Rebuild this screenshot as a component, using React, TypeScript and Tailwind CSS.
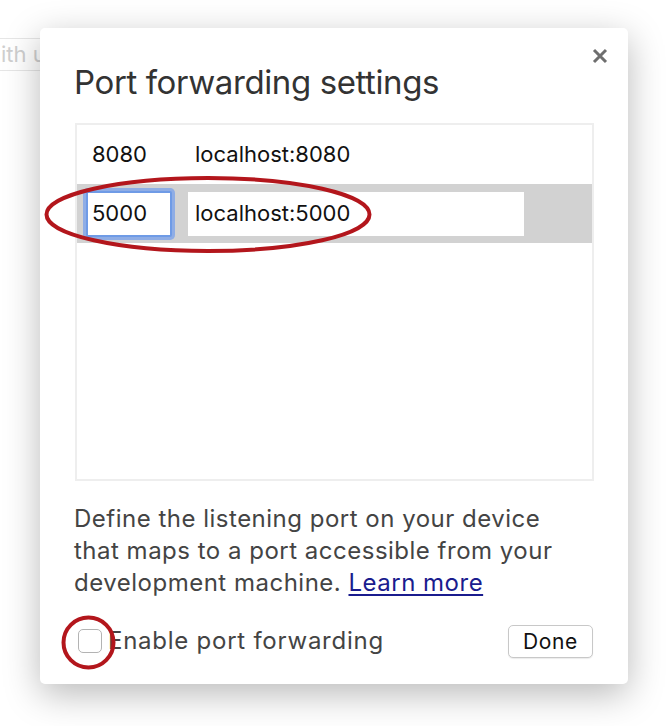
import React from 'react'

const font = { fontFamily: 'Inter, "Noto Sans", sans-serif' }

function CloseIcon() {
  return (
    <svg width="16" height="16" viewBox="0 0 16 16" className="text-[#6e6e6e]">
      <path d="M2 2 L14 14 M14 2 L2 14" stroke="currentColor" strokeWidth="3" strokeLinecap="butt" />
    </svg>
  )
}

export default function App() {
  return (
    <div className="relative w-[668px] h-[726px] bg-white overflow-hidden" style={font}>
      {/* page behind the dialog */}
      <div className="pt-[38px]">
        <div className="w-[120px] h-[33px] border border-[#e6e6e6] flex items-center text-[22px] text-[#cfcfcf] -ml-[14px]">
          <span className="pl-[14px]">ith u</span>
        </div>
      </div>

      {/* dialog */}
      <div className="absolute left-[40px] top-[28px] w-[588px] h-[656px] bg-white rounded-[5px] shadow-[0_10px_36px_rgba(0,0,0,0.28)] flex flex-col px-[34px]">
        <button className="absolute top-[20px] right-[20px] w-[16px] h-[16px] flex items-center justify-center">
          <CloseIcon />
        </button>

        <h1 className="mt-[34px] text-[33px] leading-[40px] text-[#333] font-normal tracking-[-0.4px]">Port forwarding settings</h1>

        <div className="mt-[21px] ml-[1px] h-[358px] border-2 border-[#eeeeee] flex flex-col">
          <div className="h-[59px] flex items-center text-[22px] text-[#111]">
            <span className="pl-[15px] w-[118px]">8080</span>
            <span>localhost:8080</span>
          </div>
          <div className="h-[59px] bg-[#d2d2d2] flex items-center text-[22px] text-[#111]">
            <div className="ml-[9px] w-[86px] h-[46px] bg-white border-2 border-[#6f9be6] shadow-[0_0_0_3px_rgba(120,160,235,0.75)] rounded-[2px] flex items-center pl-[4px]">
              5000
            </div>
            <div className="ml-[16px] w-[336px] h-[44px] bg-white flex items-center pl-[7px]">
              localhost:5000
            </div>
          </div>
        </div>

        <p className="mt-[22px] w-[505px] text-[24px] leading-[32px] tracking-[0.5px] text-[#444]">
          Define the listening port on your device that maps to a port accessible from your development machine.{' '}
          <a href="#" className="text-[#1a1c8e] underline underline-offset-[3px] decoration-[1.5px]">Learn more</a>
        </p>

        <div className="mt-[24px] flex items-center justify-between">
          <label className="flex items-center gap-[6px] text-[24px] tracking-[0.75px] text-[#444]">
            <span className="ml-[4px] w-[24px] h-[24px] rounded-[5px] border border-[#b3b3b3] bg-white"></span>
            Enable port forwarding
          </label>
          <button className="w-[85px] h-[33px] rounded-[5px] border border-[#c8c8c8] bg-white text-[21px] tracking-[0.6px] text-[#111] shadow-[0_1px_1px_rgba(0,0,0,0.08)] mr-[1px]">
            Done
          </button>
        </div>

        {/* annotation marks */}
        <svg className="absolute left-0 top-0 pointer-events-none" width="588" height="656">
          <ellipse cx="168" cy="186.5" rx="161.5" ry="36.5" fill="none" stroke="#b3161c" strokeWidth="4" />
          <circle cx="48.5" cy="614.5" r="25" fill="none" stroke="#b3161c" strokeWidth="4" />
        </svg>
      </div>
    </div>
  )
}
